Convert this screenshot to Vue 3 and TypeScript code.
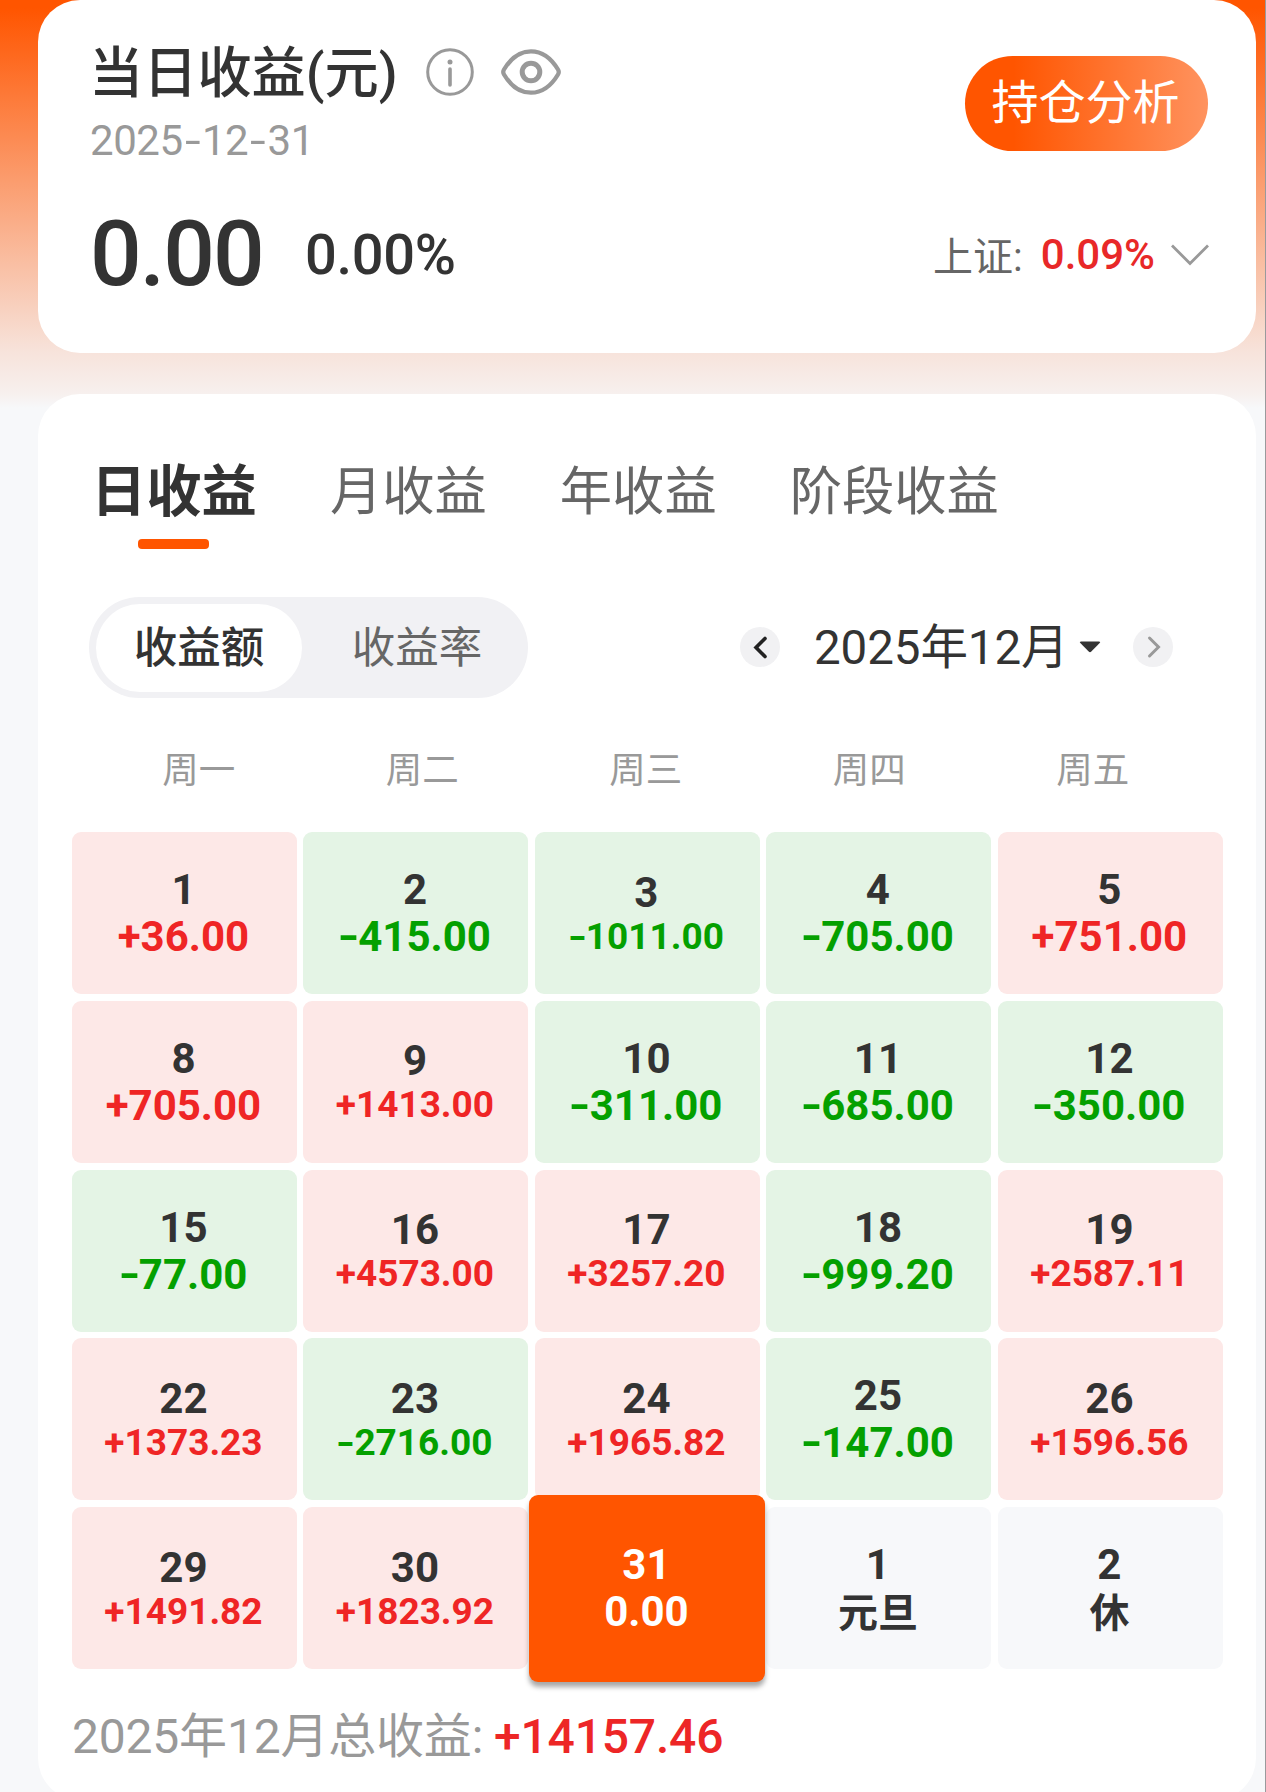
<script setup lang="ts">
import { ref } from 'vue'

interface Day {
  day: number
  value: string
  rest?: boolean
  selected?: boolean
}

const tabs = ['日收益', '月收益', '年收益', '阶段收益']
const activeTab = ref(0)
const modes = ['收益额', '收益率']
const activeMode = ref(0)
const weekdays = ['周一', '周二', '周三', '周四', '周五']

const days: Day[] = [
  { day: 1, value: '+36.00' },
  { day: 2, value: '-415.00' },
  { day: 3, value: '-1011.00' },
  { day: 4, value: '-705.00' },
  { day: 5, value: '+751.00' },
  { day: 8, value: '+705.00' },
  { day: 9, value: '+1413.00' },
  { day: 10, value: '-311.00' },
  { day: 11, value: '-685.00' },
  { day: 12, value: '-350.00' },
  { day: 15, value: '-77.00' },
  { day: 16, value: '+4573.00' },
  { day: 17, value: '+3257.20' },
  { day: 18, value: '-999.20' },
  { day: 19, value: '+2587.11' },
  { day: 22, value: '+1373.23' },
  { day: 23, value: '-2716.00' },
  { day: 24, value: '+1965.82' },
  { day: 25, value: '-147.00' },
  { day: 26, value: '+1596.56' },
  { day: 29, value: '+1491.82' },
  { day: 30, value: '+1823.92' },
  { day: 31, value: '0.00', selected: true },
  { day: 1, value: '元旦', rest: true },
  { day: 2, value: '休', rest: true },
]

function cellClass(d: Day) {
  return {
    up: d.value.startsWith('+'),
    down: d.value.startsWith('-'),
    rest: d.rest,
    selected: d.selected,
    compact: d.value.length > 7,
  }
}
</script>

<template>
  <main class="page">
    <section class="card summary">
      <div class="top">
        <div class="heading">
          <div class="title-row">
            <h1>当日收益(元)</h1>
            <svg class="info" width="48" height="48" viewBox="0 0 48 48" fill="none" stroke="#999">
              <circle cx="24" cy="24" r="22.3" stroke-width="3" />
              <path d="M24 21v16" stroke-width="3.6" stroke-linecap="round" />
              <circle cx="24" cy="14" r="2.5" fill="#999" stroke="none" />
            </svg>
            <svg class="eye" width="60" height="46" viewBox="0 0 60 46" fill="none" stroke="#999">
              <path d="M3 20.5C9 10.500 18 2.300 30 2.300S51 10.500 57 20.500Q58.500 23 57 25.500C51 35.500 42 43.700 30 43.700S9 35.500 3 25.500Q1.500 23 3 20.500Z" stroke-width="4.300" />
              <circle cx="30" cy="23" r="8.800" stroke-width="5" />
            </svg>
          </div>
          <div class="date">2025<i class="dash">-</i>12<i class="dash">-</i>31</div>
        </div>
        <button class="analyse">持仓分析</button>
      </div>
      <div class="figures">
        <span class="amount">0.00</span>
        <span class="rate">0.00%</span>
        <span class="index-name">上证:</span>
        <span class="index-rate">0.09%</span>
        <svg class="chevron" width="38" height="22" viewBox="0 0 38 22" fill="none" stroke="#999" stroke-width="2.800">
          <path d="M1 1.500 19 19.500 37 1.500" />
        </svg>
      </div>
    </section>

    <section class="card detail">
      <nav class="tabs">
        <span v-for="(t, i) in tabs" :key="t" class="tab" :class="{ active: i === activeTab }" @click="activeTab = i">{{ t }}</span>
      </nav>

      <div class="controls">
        <div class="segmented">
          <span v-for="(m, i) in modes" :key="m" class="segment" :class="{ active: i === activeMode }" @click="activeMode = i">{{ m }}</span>
        </div>
        <div class="month">
          <span class="round">
            <svg width="40" height="40" viewBox="0 0 40 40" fill="none" stroke="#222" stroke-width="3.600"><path d="M25 11.500 16 20.500 25 29.500" stroke-linecap="round" /></svg>
          </span>
          <span class="month-label">2025年12月</span>
          <svg class="caret" width="22" height="12" viewBox="0 0 22 12"><path d="M2 .500H20Q22 .500 20.700 2L12.300 10.500Q11 11.800 9.700 10.500L1.300 2Q0 .500 2 .500Z" fill="#333" /></svg>
          <span class="round">
            <svg width="40" height="40" viewBox="0 0 40 40" fill="none" stroke="#999" stroke-width="3"><path d="M16.500 11 25.500 20 16.500 29" stroke-linecap="round" /></svg>
          </span>
        </div>
      </div>

      <div class="weekdays">
        <span v-for="w in weekdays" :key="w">{{ w }}</span>
      </div>

      <div class="grid">
        <div v-for="(d, i) in days" :key="i" class="cell" :class="cellClass(d)">
          <span class="day">{{ d.day }}</span>
          <span v-if="d.value.startsWith('-')" class="value"><i class="dash">-</i>{{ d.value.slice(1) }}</span>
          <span v-else class="value">{{ d.value }}</span>
        </div>
      </div>

      <p class="total">2025年12月总收益:<b>+14157.46</b></p>
    </section>
  </main>
</template>

<style>
body {
  margin: 0;
  overflow: hidden;
}
</style>

<style scoped>
.page {
  box-sizing: border-box;
  width: 1266px;
  height: 1792px;
  overflow: hidden;
  padding: 0 9px 0 38px;
  border-right: 1px solid #9a9a9c;
  background: linear-gradient(#ff5500 0, #ff5500 8px, #f7e3db 352px, #f7f0ee 394px, #f7f8fa 408px);
  font-family: Roboto, 'Noto Sans CJK SC', sans-serif;
  color: #333;
  white-space: nowrap;
}
.card {
  box-sizing: border-box;
  background: #fff;
  border-radius: 42px;
}
/* Hyphen widened to the length of a figure minus */
.dash {
  display: inline-block;
  width: 0.460em;
  font-style: normal;
  text-align: center;
  transform: scaleX(1.350);
}
.summary {
  height: 353px;
  padding: 41px 48px 0 52px;
}
.top {
  display: flex;
  justify-content: space-between;
  align-items: flex-start;
}
.title-row {
  display: flex;
  align-items: center;
  height: 62px;
}
h1 {
  width: 337px;
  margin: 0 0 0 -1px;
  padding-top: 4px;
  font-size: 54.200px;
  line-height: 62px;
  font-weight: 500;
}
.eye {
  margin-left: 27px;
}
.date {
  margin-top: 13px;
  font-size: 42px;
  line-height: 50px;
  letter-spacing: -0.450px;
  color: #999;
}
.analyse {
  width: 243px;
  height: 95px;
  margin-top: 15px;
  padding: 0 2px 1px 0;
  border: 0;
  border-radius: 48px;
  background: linear-gradient(90deg, #ff5500 20%, #ff935f);
  color: #fff;
  font: 400 47px/94px Roboto, 'Noto Sans CJK SC', sans-serif;
}
.figures {
  display: flex;
  align-items: center;
  height: 102px;
  margin-top: 37px;
}
.amount {
  width: 215px;
  font-size: 91px;
  font-weight: 500;
  letter-spacing: -1.900px;
}
.rate {
  flex: 1;
  padding-top: 2px;
  font-size: 56px;
  font-weight: 500;
  letter-spacing: -0.350px;
}
.index-name {
  margin-right: 18px;
  font-size: 40px;
  color: #666;
}
.index-rate {
  padding-top: 1px;
  font-size: 42px;
  font-weight: 500;
  color: #e82828;
}
.chevron {
  margin: 2px -1px 0 16px;
}
.detail {
  height: 1406px;
  margin-top: 41px;
  padding: 60px 33px 0 34px;
}
.tabs {
  display: flex;
  gap: 73px;
  height: 95px;
  padding-left: 19px;
}
.tab {
  font-size: 52.300px;
  line-height: 77px;
  color: #666;
}
.tab.active {
  display: flex;
  flex-direction: column;
  align-items: center;
  font-size: 55.300px;
  font-weight: 700;
  color: #333;
}
.tab.active::after {
  content: '';
  width: 71px;
  height: 10px;
  margin-top: 8px;
  border-radius: 4px;
  background: #ff5500;
}
.controls {
  display: flex;
  justify-content: space-between;
  height: 101px;
  margin-top: 48px;
  padding: 0 50px 0 17px;
}
.segmented {
  box-sizing: border-box;
  display: flex;
  width: 439px;
  padding: 7px 7px 6px;
  border-radius: 51px;
  background: #f1f1f4;
}
.segment {
  height: 88px;
  width: 206px;
  border-radius: 44px;
  font-size: 43.500px;
  line-height: 90px;
  text-align: center;
  color: #666;
}
.segment:last-child {
  margin-left: 12px;
}
.segment.active {
  background: #fff;
  color: #333;
  font-weight: 500;
}
.month {
  display: flex;
  align-items: center;
  width: 433px;
  height: 99px;
}
.round {
  width: 40px;
  height: 40px;
  border-radius: 50%;
  background: #f1f1f3;
}
.round svg {
  display: block;
}
.month-label {
  margin-left: 34px;
  width: 265px;
  padding-bottom: 6px;
  font-size: 47.500px;
  letter-spacing: -0.100px;
}
.caret {
  margin-right: 32px;
}
.weekdays {
  display: grid;
  grid-template-columns: repeat(5, 223.500px);
  height: 52px;
  margin: 45px 0 37px 15px;
  font-size: 36.500px;
  line-height: 55px;
  text-align: center;
  color: #999;
}
.grid {
  display: grid;
  grid-template-columns: repeat(5, 224.900px);
  grid-auto-rows: 162px;
  gap: 6.750px 6.600px;
}
.cell {
  display: flex;
  flex-direction: column;
  align-items: center;
  justify-content: center;
  border-radius: 9px;
  font-size: 42px;
  font-weight: 700;
  line-height: 47px;
}
.day,
.value {
  height: 47px;
  padding-right: 2px;
}
.compact .value {
  height: 42px;
  font-size: 37px;
  line-height: 41px;
}
.up {
  background: #fde8e7;
}
.up .value {
  color: #ef2525;
}
.down {
  background: #e4f4e5;
}
.down .value {
  color: #04a000;
}
.rest {
  background: #f7f8fa;
}
.rest .value {
  font-size: 40px;
  line-height: 51px;
}
.selected {
  z-index: 1;
  margin: -12px -5.500px -13px;
  background: #ff5500;
  color: #fff;
  box-shadow: 0 5px 5px rgba(0, 0, 0, 0.340);
}
.selected .day {
  margin-top: -1px;
}
.total {
  margin: 34px 0 0;
  font-size: 48px;
  line-height: 68px;
  letter-spacing: -0.200px;
  color: #999;
}
.total b {
  margin-left: 11px;
  font-weight: 500;
  color: #ed2626;
}
</style>
